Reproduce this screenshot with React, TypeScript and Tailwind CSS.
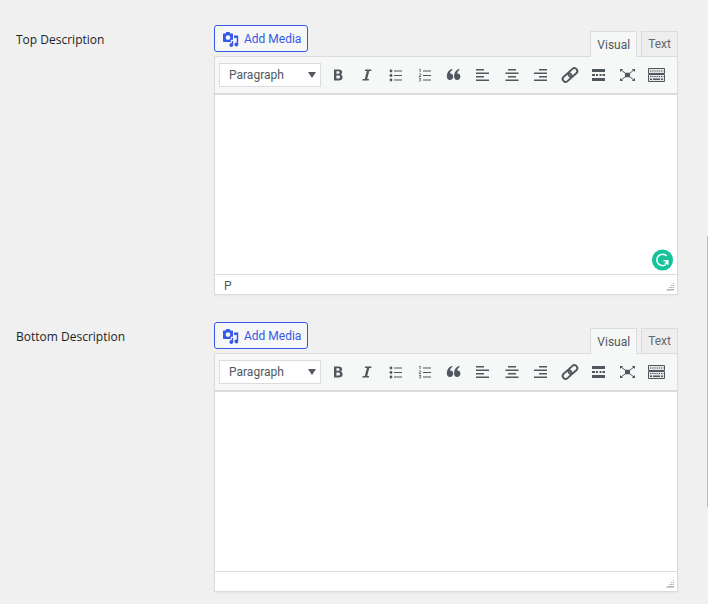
import React, { useState } from "react";

const icons: { name: string; art: React.ReactNode }[] = [
  {
    name: "Bold",
    art: (
      <path
        fillRule="evenodd"
        d="M6 4.500h4.600c2.300 0 3.500 1 3.500 2.800 0 1.200-.6 2-1.600 2.300 1.300.3 2.100 1.200 2.100 2.600 0 2.100-1.500 3.300-4 3.300H6zM8.400 6.300v2.500h1.700c1 0 1.500-.4 1.500-1.250s-.5-1.250-1.500-1.250zm0 4.200v3.100h1.900c1.100 0 1.700-.5 1.700-1.550s-.6-1.550-1.700-1.550z"
      />
    ),
  },
  {
    name: "Italic",
    art: <path d="M8.300 4.500h6.300l-.4 1.500h-1.900L10.200 14h1.900l-.4 1.500H5.300l.4-1.500h2.100L9.900 6H7.900z" />,
  },
  {
    name: "Bulleted list",
    art: (
      <>
        <circle cx="5" cy="6" r="1.400" />
        <circle cx="5" cy="10.500" r="1.400" />
        <circle cx="5" cy="15" r="1.400" />
        <path d="M8 5.400h8v1.100H8zM8 10h8v1.100H8zM8 14.500h8v1.100H8z" />
      </>
    ),
  },
  {
    name: "Numbered list",
    art: (
      <>
        <path d="M8 5.400h8v1.100H8zM8 10h8v1.100H8zM8 14.500h8v1.100H8z" />
        <path
          fill="none"
          stroke="currentColor"
          strokeWidth=".8"
          d="M4.200 4.600l1-.6v3.200M4 9.200c.5-.6 2-.5 1.900.3 0 .7-1.900 1.200-1.900 2h2.100M4 13.400h1.900l-1 1.100c1.400 0 1.400 1.900-.9 1.500"
        />
      </>
    ),
  },
  {
    name: "Blockquote",
    art: (
      <path d="M8.700 4.800c-1.700 1-2.600 2.300-2.700 3.700 2-.1 3.200 1.200 3.200 3.100 0 2-1.400 3.400-3.200 3.400-2 0-3.200-1.600-3.200-4 0-3.200 1.900-5.800 4.900-6.900zM15.900 4.800c-1.700 1-2.600 2.300-2.700 3.700 2-.1 3.200 1.200 3.200 3.100 0 2-1.400 3.400-3.200 3.400-2 0-3.200-1.600-3.200-4 0-3.200 1.900-5.800 4.900-6.900z" />
    ),
  },
  {
    name: "Align left",
    art: <path d="M3 4h8v1.500H3zM3 7.500h13V9H3zM3 11h8v1.500H3zM3 14.500h13V16H3z" />,
  },
  {
    name: "Align center",
    art: <path d="M6 4h8v1.500H6zM3.500 7.500h13V9h-13zM6 11h8v1.500H6zM3.500 14.500h13V16h-13z" />,
  },
  {
    name: "Align right",
    art: <path d="M8 4h8v1.500H8zM3 7.500h13V9H3zM8 11h8v1.500H8zM3 14.500h13V16H3z" />,
  },
  {
    name: "Insert link",
    art: (
      <g fill="none" stroke="currentColor" strokeWidth="1.900" transform="rotate(-42 10 10)">
        <rect x="1.200" y="7.100" width="10" height="5.800" rx="2.900" />
        <rect x="8.800" y="7.100" width="10" height="5.800" rx="2.900" />
      </g>
    ),
  },
  {
    name: "Read more",
    art: <path d="M3 4h13v3H3zM3 9h3v2H3zM7 9h2v2H7zM10.500 9h2v2h-2zM13.500 9H16v2h-2.500zM3 13h13v3H3z" />,
  },
  {
    name: "Fullscreen",
    art: (
      <>
        <path d="M7 7.800h5v4.400H7zM2 4h3.200L2 7zM17 4h-3.200L17 7zM2 16h3.200L2 13zM17 16h-3.200l3.200-3z" />
        <path fill="none" stroke="currentColor" strokeWidth="1" d="M2.500 4.500l5 4M16.500 4.500l-5 4M2.500 15.500l5-4M16.500 15.500l-5-4" />
      </>
    ),
  },
  {
    name: "Toolbar toggle",
    art: (
      <>
        <path fill="currentColor" fillOpacity=".1" stroke="currentColor" d="M1.500 3.500h16v5h-16zM1.500 9.500h16v7h-16z" />
        <path fill="none" stroke="currentColor" strokeWidth="1.200" strokeDasharray="1.300 .9" d="M3 6h13.500M3 11.500h13.500" />
        <path d="M3 13.500h2V15H3zM6 13.500h7V15H6zM14 13.500h2V15h-2z" />
      </>
    ),
  },
];

function MediaIcon() {
  return (
    <svg viewBox="0 0 18 18" className="size-[18px]" fill="currentColor" aria-hidden="true">
      <path
        fillRule="evenodd"
        d="M2 3.500h1.500l.8-1.500h3.200l.8 1.500H10c.6 0 1 .4 1 1v5.300H8.800V12H2c-.6 0-1-.4-1-1V4.500c0-.6.4-1 1-1zM6 5.300a2.300 2.300 0 1 0 0 4.600 2.300 2.300 0 0 0 0-4.600z"
      />
      <path d="M12 5.500h4.200v9a1.900 1.900 0 1 1-1.500-1.800V8H12z" />
      <path d="M9.800 11h1.400v4a1.900 1.900 0 1 1-1.400-1.800z" />
    </svg>
  );
}

function ResizeGrip() {
  return (
    <svg viewBox="0 0 8 8" className="size-2" fill="#b0b0b0" aria-hidden="true">
      <path d="M7 0h1v1H7zM5 2h1v1H5zM7 2h1v1H7zM3 4h1v1H3zM5 4h1v1H5zM7 4h1v1H7zM1 6h7v1H1z" />
      <path fillOpacity=".5" d="M6 2h1v1H6zM4 4h1v1H4zM6 4h1v1H6zM0 7h8v1H0z" />
    </svg>
  );
}

function GrammarBadge() {
  return (
    <svg viewBox="0 0 22 22" className="absolute right-[3px] bottom-[3px] size-[22px]" aria-hidden="true">
      <circle cx="10.500" cy="11" r="10.500" fill="#15c39a" />
      <path
        fill="none"
        stroke="#fff"
        strokeWidth="1.500"
        d="M14.700 7A5.700 5.700 0 1 0 14 15.500M11.500 11.800h4.300v4M15.700 12l-2.700 3.500"
      />
    </svg>
  );
}

type EditorProps = {
  id: string;
  label: string;
  path?: string;
  checked?: boolean;
};

function EditorField({ id, label, path, checked }: EditorProps) {
  const [mode, setMode] = useState("Visual");
  const [value, setValue] = useState("");

  return (
    <div className="flex">
      <label
        htmlFor={id}
        className="w-[198px] shrink-0 pt-[5px] font-['Open_Sans','Noto_Sans',sans-serif] text-[12px] leading-5 font-medium text-[#1d2327]"
      >
        {label}
      </label>

      <div className="min-w-0 flex-1">
        <div className="flex h-[31px] items-start justify-between">
          <button
            type="button"
            className="flex h-[27px] items-center gap-1 rounded-[3px] border border-[#3858e9] bg-[#f6f7f7] pr-1.5 pl-[7px] text-[12px] text-[#3858e9]"
          >
            <MediaIcon />
            Add Media
          </button>
          <div role="tablist" className="flex items-end gap-1 self-end">
            {["Visual", "Text"].map((tab) => (
              <button
                key={tab}
                type="button"
                role="tab"
                aria-selected={mode === tab}
                onClick={() => setMode(tab)}
                className={
                  mode === tab
                    ? "relative z-10 -mb-px h-[26px] border border-b-0 border-[#dcdcde] bg-[#f6f7f7] px-1.5 text-[12px] text-[#50575e]"
                    : "h-[25px] border border-b-0 border-[#dcdcde] bg-[#eeeeee] px-1.5 text-[12px] text-[#646970]"
                }
              >
                {tab}
              </button>
            ))}
          </div>
        </div>

        <div className="border border-[#dcdcde] bg-white shadow-xs">
          <div className="flex h-[38px] items-center border-b-2 border-[#dcdcde] bg-[#f6f7f7] pl-1">
            <div className="relative mr-0.5">
              <select
                aria-label="Text format"
                className="block h-6 w-[102px] appearance-none border border-[#dcdcde] bg-white pl-[9px] text-[12px] text-[#50575e]"
              >
                <option>Paragraph</option>
                <option>Heading 1</option>
                <option>Heading 2</option>
                <option>Preformatted</option>
              </select>
              <svg
                viewBox="0 0 8 6"
                className="pointer-events-none absolute top-[9px] right-[5px] h-1.5 w-2"
                fill="#50575e"
                aria-hidden="true"
              >
                <path d="M0 0h8L4 6z" />
              </svg>
            </div>
            {icons.map((icon) => (
              <button
                key={icon.name}
                type="button"
                aria-label={icon.name}
                className="flex h-7 w-[29px] items-center justify-center text-[#50575e]"
              >
                <svg viewBox="0 0 20 20" className="size-5" fill="currentColor" aria-hidden="true">
                  {icon.art}
                </svg>
              </button>
            ))}
          </div>

          <div className="relative">
            <textarea
              id={id}
              value={value}
              onChange={(e) => setValue(e.target.value)}
              className="block h-[179px] w-full resize-none p-2 text-[12px] text-[#1d2327] outline-none"
            />
            {checked && <GrammarBadge />}
          </div>

          <div className="flex h-5 items-center justify-between border-t border-[#dcdcde] pr-[3px] pl-[9px] text-[12px] text-[#50575e]">
            <span className="pt-0.5">{path}</span>
            <span className="self-end pb-[3px]">
              <ResizeGrip />
            </span>
          </div>
        </div>
      </div>
    </div>
  );
}

export default function App() {
  return (
    <div className="relative min-h-screen bg-[#f0f0f1] font-['Roboto','Open_Sans',sans-serif]">
      <form className="flex flex-col gap-[27px] pt-[25px] pr-[30px] pb-3 pl-4">
        <EditorField id="top-description" label="Top Description" path="P" checked />
        <EditorField id="bottom-description" label="Bottom Description" />
      </form>
      <div className="absolute top-[39%] right-0 h-[45%] w-px bg-[#bdbdbd]" />
    </div>
  );
}
